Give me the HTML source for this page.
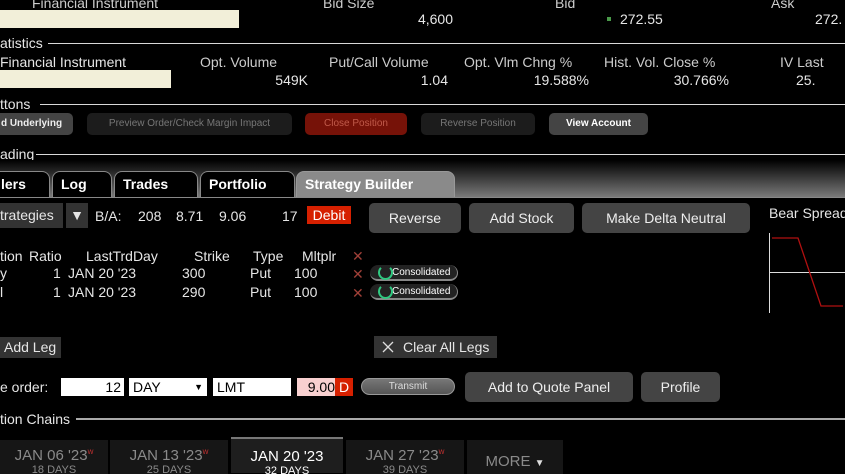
<!DOCTYPE html>
<html><head><meta charset="utf-8"><style>
html,body{margin:0;padding:0;background:#000;width:845px;height:474px;overflow:hidden;position:relative;font-family:"Liberation Sans","DejaVu Sans",sans-serif;color:#e6e6e6;font-size:14px}
.a{position:absolute;white-space:nowrap}
.r{text-align:right}
.cream{position:absolute;background:#f2efd9}
.hl{position:absolute;height:1px;background:#d8d8d8}
.b{position:absolute;border-radius:5px;font-size:10px;text-align:center;line-height:22px}
.btn{position:absolute;background:#444;border-radius:5px;text-align:center;color:#eee;font-size:14px}
.tab{position:absolute;top:171px;height:26px;background:#000;border:1px solid #888;border-bottom:none;border-radius:8px 8px 0 0;font-weight:bold;color:#fff;line-height:24px;padding-left:8px;box-sizing:border-box}
.x{position:absolute;color:#a04038;font-weight:bold;font-size:14px}
.pill{position:absolute;width:88px;height:16px;border-radius:8px;background:#222;border-bottom:2px solid #888;border-right:1px solid #888;font-size:10px;color:#fff;line-height:16px;padding-left:22px;box-sizing:border-box}
.ring{position:absolute;left:8px;top:0px;width:11px;height:11px;border:2px solid #2fc880;border-radius:50%;border-top-color:transparent}
.inp{position:absolute;top:378px;height:18px;background:#fff;color:#000;line-height:18px;font-size:14px;box-sizing:border-box}
.dt{position:absolute;top:440px;height:34px;background:#161616;text-align:center;color:#8a8a8a}
.dt .m{font-size:15px;margin-top:7px}
.dt .d{font-size:11px;margin-top:0}
sup{color:#c03030;font-size:8px}
</style></head><body>
<div class="a" style="left:32px;top:-5px;color:#ccc">Financial Instrument</div>
<div class="a" style="left:323px;top:-5px;color:#ccc">Bid Size</div>
<div class="a" style="left:555px;top:-5px;color:#ccc">Bid</div>
<div class="a" style="left:771px;top:-5px;color:#ccc">Ask</div>
<div class="cream" style="left:0;top:10px;width:239px;height:18px"></div>
<div class="a r" style="left:380px;width:73px;top:11px">4,600</div>
<div class="a" style="left:607px;top:17px;width:4px;height:4px;background:#4a9a4a"></div>
<div class="a" style="left:620px;top:11px">272.55</div>
<div class="a" style="left:815px;top:11px">272.</div>
<div class="a" style="left:0;top:35px">atistics</div><div class="hl" style="left:48px;right:0;top:43px"></div>
<div class="a" style="left:0;top:54px">Financial Instrument</div>
<div class="a" style="left:200px;top:54px;color:#ccc">Opt. Volume</div>
<div class="a" style="left:329px;top:54px;color:#ccc">Put/Call Volume</div>
<div class="a" style="left:464px;top:54px;color:#ccc">Opt. Vlm Chng %</div>
<div class="a" style="left:604px;top:54px;color:#ccc">Hist. Vol. Close %</div>
<div class="a" style="left:780px;top:54px;color:#ccc">IV Last</div>
<div class="cream" style="left:0;top:70px;width:171px;height:18px"></div>
<div class="a r" style="left:240px;width:68px;top:72px">549K</div>
<div class="a r" style="left:380px;width:68px;top:72px">1.04</div>
<div class="a r" style="left:500px;width:89px;top:72px">19.588%</div>
<div class="a r" style="left:640px;width:89px;top:72px">30.766%</div>
<div class="a" style="left:796px;top:72px">25.</div>
<div class="a" style="left:0;top:96px">ttons</div><div class="hl" style="left:40px;right:0;top:104px"></div>
<div class="b" style="left:-10px;top:113px;width:83px;background:#444;color:#eee;font-weight:bold">d Underlying</div>
<div class="b" style="left:87px;top:113px;width:205px;background:#1c1c1c;color:#777">Preview Order/Check Margin Impact</div>
<div class="b" style="left:305px;top:113px;width:102px;background:#761208;color:#c05a4a">Close Position</div>
<div class="b" style="left:421px;top:113px;width:114px;background:#1c1c1c;color:#777">Reverse Position</div>
<div class="b" style="left:549px;top:113px;width:99px;background:#444;color:#fff;font-weight:bold">View Account</div>
<div class="a" style="left:0;top:146px">ading</div><div class="hl" style="left:36px;right:0;top:154px"></div>
<div class="a" style="left:0;top:160px;width:845px;height:37px;background:linear-gradient(#000,#7a7a7a)"></div>
<div class="tab" style="left:-20px;width:70px;padding-left:20px">lers</div>
<div class="tab" style="left:52px;width:60px">Log</div>
<div class="tab" style="left:114px;width:84px">Trades</div>
<div class="tab" style="left:200px;width:95px">Portfolio</div>
<div class="tab" style="left:296px;width:159px;background:#8a8a8a;border-color:#999">Strategy Builder</div>
<div class="a" style="left:0;top:197px;width:845px;height:1px;background:#888"></div>
<div class="a" style="left:0;top:203px;width:63px;height:25px;background:#333;line-height:25px">trategies</div>
<div class="a" style="left:66px;top:203px;width:22px;height:25px;background:#333;line-height:25px;text-align:center">▼</div>
<div class="a" style="left:95px;top:208px">B/A:</div>
<div class="a" style="left:138px;top:208px">208</div>
<div class="a" style="left:176px;top:208px">8.71</div>
<div class="a" style="left:219px;top:208px">9.06</div>
<div class="a" style="left:282px;top:208px">17</div>
<div class="a" style="left:307px;top:206px;width:44px;height:18px;background:#d62000;color:#fff;text-align:center;line-height:18px">Debit</div>
<div class="btn" style="left:369px;top:203px;width:92px;height:30px;line-height:30px">Reverse</div>
<div class="btn" style="left:469px;top:203px;width:105px;height:30px;line-height:30px">Add Stock</div>
<div class="btn" style="left:582px;top:203px;width:168px;height:30px;line-height:30px">Make Delta Neutral</div>
<div class="a" style="left:769px;top:205px">Bear Spread</div>
<svg class="a" style="left:765px;top:230px" width="80" height="85"><line x1="4.5" y1="3" x2="4.5" y2="83" stroke="#ddd"/><line x1="4" y1="42.5" x2="80" y2="42.5" stroke="#ddd"/><polyline points="7,8 33,8 56,76 78,76" fill="none" stroke="#b01010" stroke-width="1.3"/></svg>
<div class="a" style="left:0;top:248px">tion</div><div class="a" style="left:29px;top:248px">Ratio</div><div class="a" style="left:86px;top:248px">LastTrdDay</div><div class="a" style="left:194px;top:248px">Strike</div><div class="a" style="left:253px;top:248px">Type</div><div class="a" style="left:302px;top:248px">Mltplr</div><div class="x" style="left:352px;top:248px">✕</div>
<div class="a" style="left:0;top:265px">y</div><div class="a" style="left:53px;top:265px">1</div><div class="a" style="left:68px;top:265px">JAN 20 '23</div><div class="a" style="left:182px;top:265px">300</div><div class="a" style="left:250px;top:265px">Put</div><div class="a" style="left:294px;top:265px">100</div><div class="x" style="left:352px;top:266px">✕</div>
<div class="pill" style="left:370px;top:265px"><div class="ring"></div>Consolidated</div>
<div class="a" style="left:0;top:284px">l</div><div class="a" style="left:53px;top:284px">1</div><div class="a" style="left:68px;top:284px">JAN 20 '23</div><div class="a" style="left:182px;top:284px">290</div><div class="a" style="left:250px;top:284px">Put</div><div class="a" style="left:294px;top:284px">100</div><div class="x" style="left:352px;top:285px">✕</div>
<div class="pill" style="left:370px;top:284px"><div class="ring"></div>Consolidated</div>
<div class="a" style="left:0;top:337px;width:61px;height:21px;background:#333;line-height:21px;padding-left:4px;box-sizing:border-box">Add Leg</div>
<div class="a" style="left:374px;top:336px;width:123px;height:22px;background:#333;line-height:22px;padding-left:29px;box-sizing:border-box">Clear All Legs<svg style="position:absolute;left:8px;top:5px" width="12" height="12"><path d="M1 1L11 11M11 1L1 11" stroke="#ddd" stroke-width="1.3"/></svg></div>
<div class="a" style="left:0;top:379px">e order:</div>
<div class="inp" style="left:61px;width:63px;text-align:right;padding-right:3px">12</div>
<div class="inp" style="left:129px;width:78px;padding-left:4px">DAY<span style="position:absolute;right:4px;font-size:9px">▼</span></div>
<div class="inp" style="left:213px;width:78px;padding-left:4px">LMT</div>
<div class="inp" style="left:297px;width:38px;background:#f8d0d0;text-align:right">9.00</div>
<div class="inp" style="left:335px;width:18px;background:#d62000;color:#fff;text-align:center">D</div>
<div class="a" style="left:361px;top:378px;width:94px;height:17px;border-radius:9px;background:linear-gradient(#777,#555);border:1px solid #999;box-sizing:border-box;color:#ddd;font-size:10px;text-align:center;line-height:15px">Transmit</div>
<div class="btn" style="left:465px;top:372px;width:168px;height:30px;line-height:30px">Add to Quote Panel</div>
<div class="btn" style="left:641px;top:372px;width:79px;height:30px;line-height:30px">Profile</div>
<div class="a" style="left:0;top:411px">tion Chains</div><div class="a" style="left:76px;right:0;top:418px;height:2px;background:#aaa"></div>
<div class="dt" style="left:0;width:108px"><div class="m">JAN 06 '23<sup>w</sup></div><div class="d">18 DAYS</div></div>
<div class="dt" style="left:110px;width:118px"><div class="m">JAN 13 '23<sup>w</sup></div><div class="d">25 DAYS</div></div>
<div class="dt" style="left:231px;width:112px;background:#1e1e1e;border-top:2px solid #777;top:437px;color:#fff"><div class="m" style="margin-top:9px">JAN 20 '23</div><div class="d">32 DAYS</div></div>
<div class="dt" style="left:346px;width:118px"><div class="m">JAN 27 '23<sup>w</sup></div><div class="d">39 DAYS</div></div>
<div class="dt" style="left:467px;width:96px"><div class="m" style="margin-top:13px">MORE <span style="font-size:10px;color:#ddd">▼</span></div></div>
</body></html>
